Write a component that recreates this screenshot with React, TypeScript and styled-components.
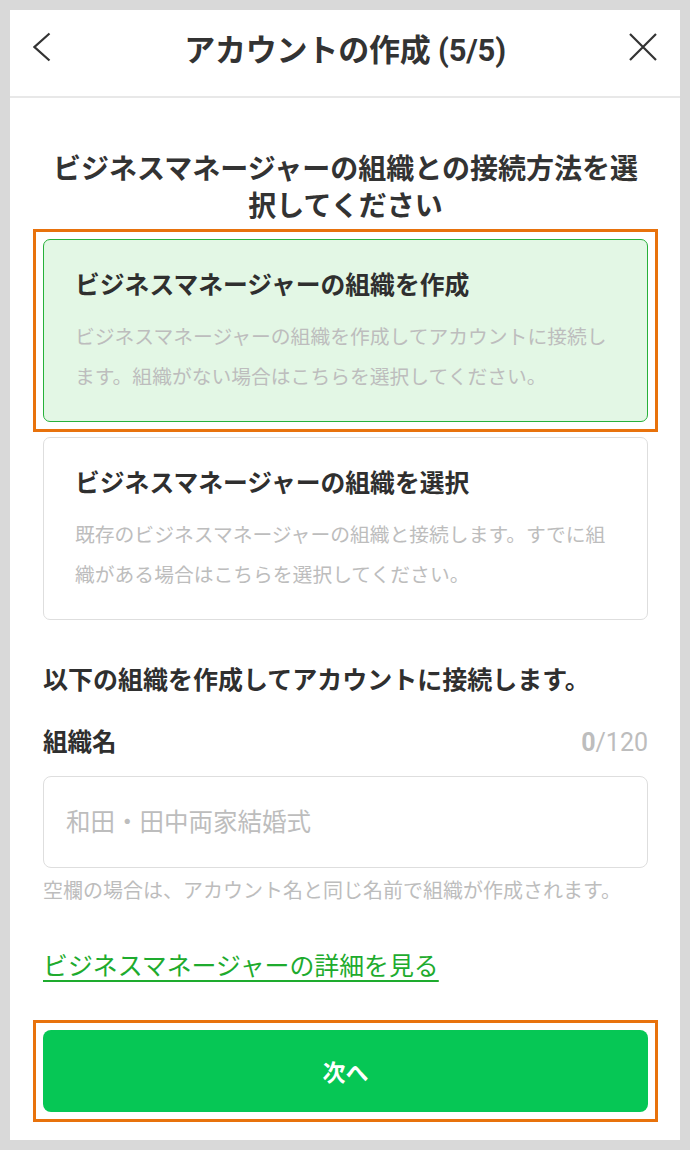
import React from 'react';
import styled, { createGlobalStyle } from 'styled-components';

const color = {
  frame: '#d9d9d9',
  text: '#2f2f2f',
  sub: '#bdbdbd',
  line: '#dedede',
  green: '#06c755',
  greenBorder: '#27b13a',
  greenBg: '#e3f7e5',
  link: '#1eab2e',
  mark: '#e8720c'
};

const GlobalStyle = createGlobalStyle`
  * { box-sizing: border-box; }
  body {
    margin: 0;
    background: ${color.frame};
    font-family: Roboto, "Noto Sans CJK JP", sans-serif;
    color: ${color.text};
  }
`;

const options = [
  {
    title: 'ビジネスマネージャーの組織を作成',
    desc: 'ビジネスマネージャーの組織を作成してアカウントに接続します。組織がない場合はこちらを選択してください。',
    selected: true
  },
  {
    title: 'ビジネスマネージャーの組織を選択',
    desc: '既存のビジネスマネージャーの組織と接続します。すでに組織がある場合はこちらを選択してください。',
    selected: false
  }
];

export default function App() {
  return (
    <>
      <GlobalStyle />
      <Frame>
        <Panel>
          <Header>
            <IconButton $align="flex-start" aria-label="戻る">
              <svg width="18" height="30" viewBox="0 0 18 30" fill="none">
                <polyline points="16.5,1.5 1.5,15 16.5,28.5" stroke="#333" strokeWidth="2.2" />
              </svg>
            </IconButton>
            <HeaderTitle>アカウントの作成 (5/5)</HeaderTitle>
            <IconButton $align="flex-end" aria-label="閉じる">
              <svg width="28" height="28" viewBox="0 0 28 28" fill="none">
                <path d="M1 1 L27 27 M27 1 L1 27" stroke="#333" strokeWidth="2.2" />
              </svg>
            </IconButton>
          </Header>

          <Content>
            <Heading>ビジネスマネージャーの組織との接続方法を選択してください</Heading>

            <OptionList>
              {options.map((o) => {
                const card = (
                  <OptionCard key={o.title} $selected={o.selected}>
                    <OptionTitle>{o.title}</OptionTitle>
                    <OptionDesc>{o.desc}</OptionDesc>
                  </OptionCard>
                );
                return o.selected ? <Marked key={o.title}>{card}</Marked> : card;
              })}
            </OptionList>

            <SectionText>以下の組織を作成してアカウントに接続します。</SectionText>

            <LabelRow>
              <Label>組織名</Label>
              <Counter>
                <b>0</b>/120
              </Counter>
            </LabelRow>
            <Input placeholder="和田・田中両家結婚式" />
            <Helper>空欄の場合は、アカウント名と同じ名前で組織が作成されます。</Helper>

            <Link href="#">ビジネスマネージャーの詳細を見る</Link>

            <ButtonArea>
              <NextButton>次へ</NextButton>
            </ButtonArea>
          </Content>
        </Panel>
      </Frame>
    </>
  );
}

const Frame = styled.div`
  padding: 10px;
  height: 1150px;
`;

const Panel = styled.div`
  background: #fff;
  height: 1130px;
  display: flex;
  flex-direction: column;
`;

const Header = styled.div`
  height: 88px;
  padding: 0 23px 12px;
  display: flex;
  align-items: center;
  border-bottom: 2px solid #e8e8e8;
`;

const IconButton = styled.div<{ $align: string }>`
  width: 30px;
  display: flex;
  justify-content: ${(p) => p.$align};
  align-items: center;
`;

const HeaderTitle = styled.div`
  flex: 1;
  text-align: center;
  font-size: 31px;
  font-weight: 700;
  color: #333;
  letter-spacing: -0.2px;
`;

const Content = styled.div`
  padding: 0 32px 0 33px;
  display: flex;
  flex-direction: column;
`;

const Heading = styled.h1`
  margin: 53px 0 0;
  font-size: 28px;
  line-height: 37px;
  font-weight: 700;
  text-align: center;
  color: #333;
`;

const OptionList = styled.div`
  margin-top: 14px;
  display: flex;
  flex-direction: column;
  gap: 15px;
`;

/* orange annotation frame drawn around a highlighted element */
const Marked = styled.div`
  margin: -10px;
  padding: 7px;
  border: 3px solid ${color.mark};
  display: flex;
  flex-direction: column;
`;

const ButtonArea = styled(Marked)`
  margin-top: 36px;
`;

const OptionCard = styled.div<{ $selected: boolean }>`
  padding: 31px 30px 23px 31px;
  border-radius: 7px;
  border: 1.5px solid ${(p) => (p.$selected ? color.greenBorder : color.line)};
  background: ${(p) => (p.$selected ? color.greenBg : '#fff')};
`;

const OptionTitle = styled.div`
  font-size: 24.8px;
  line-height: 30px;
  font-weight: 700;
  color: #2f2f2f;
`;

const OptionDesc = styled.div`
  margin-top: 17px;
  font-size: 19.8px;
  line-height: 40px;
  color: ${color.sub};
`;

const SectionText = styled.div`
  margin-top: 44px;
  font-size: 25px;
  line-height: 34px;
  font-weight: 700;
`;

const LabelRow = styled.div`
  margin-top: 28px;
  display: flex;
  justify-content: space-between;
  align-items: center;
  line-height: 34px;
`;

const Label = styled.div`
  font-size: 24.5px;
  font-weight: 700;
`;

const Counter = styled.div`
  font-size: 25px;
  color: ${color.sub};
  b {
    font-weight: 700;
  }
`;

const Input = styled.input`
  margin-top: 16px;
  height: 92px;
  border: 1.5px solid ${color.line};
  border-radius: 8px;
  padding: 0 22px;
  font-family: inherit;
  font-size: 24.5px;
  outline: none;
  &::placeholder {
    color: ${color.sub};
  }
`;

const Helper = styled.div`
  margin-top: 9px;
  font-size: 20px;
  line-height: 28px;
  color: ${color.sub};
`;

const Link = styled.a`
  margin-top: 45px;
  align-self: flex-start;
  font-size: 24.9px;
  line-height: 34px;
  color: ${color.link};
  text-decoration: underline;
  text-decoration-thickness: 1.5px;
  text-underline-offset: 5px;
`;

const NextButton = styled.button`
  height: 82px;
  border: none;
  border-radius: 8px;
  background: ${color.green};
  color: #fff;
  font-family: inherit;
  font-size: 23px;
  font-weight: 700;
`;
